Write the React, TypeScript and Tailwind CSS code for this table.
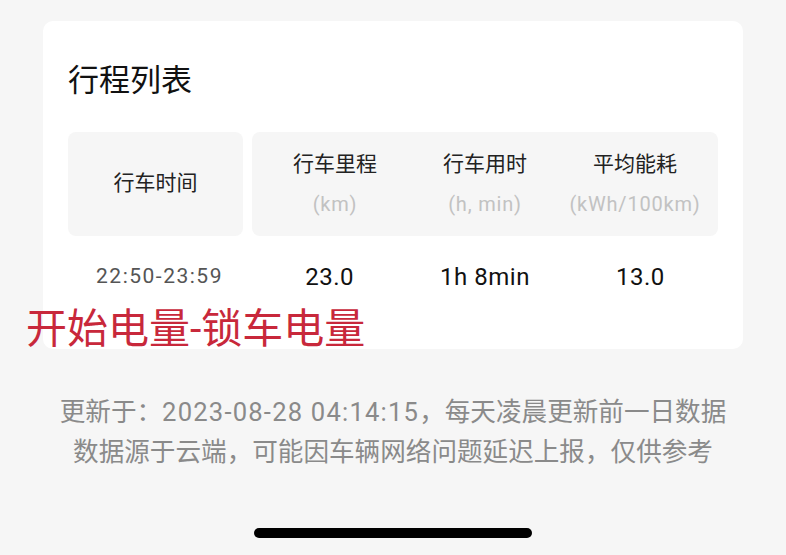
import React from 'react';

const font = { fontFamily: 'Roboto, "Noto Sans CJK SC", sans-serif' };

const columns = [
  { title: '行车里程', unit: '(km)', value: '23.0' },
  { title: '行车用时', unit: '(h, min)', value: '1h 8min' },
  { title: '平均能耗', unit: '(kWh/100km)', value: '13.0' },
];

export default function App() {
  return (
    <div className="relative w-[786px] h-[555px] bg-[#f6f6f6] overflow-hidden" style={font}>
      <div className="pt-[21px] px-[43px]">
        {/* Card */}
        <div className="relative h-[328px] bg-white rounded-[10px] px-[25px] pt-[40px]">
          <h1 className="text-[31px] leading-[40px] text-[#111] font-normal">行程列表</h1>

          {/* Header */}
          <div className="mt-[31px] flex gap-[9px] h-[104px]">
            <div className="w-[175px] rounded-[8px] bg-[#f6f6f6] flex items-center justify-center text-[21px] text-[#222]">
              行车时间
            </div>
            <div className="flex-1 rounded-[8px] bg-[#f6f6f6] grid grid-cols-3 items-center px-[8px]">
              {columns.map((c) => (
                <div key={c.title} className="flex flex-col items-center">
                  <span className="text-[21px] leading-[26px] text-[#222]">{c.title}</span>
                  <span className="mt-[14px] text-[20px] leading-[26px] tracking-[0.8px] text-[#c2c2c2]">{c.unit}</span>
                </div>
              ))}
            </div>
          </div>

          {/* Row */}
          <div className="mt-[23px] flex gap-[9px] items-center">
            <div className="w-[175px] text-center text-[21px] tracking-[1.5px] text-[#555] pl-[8px]">22:50-23:59</div>
            <div className="flex-1 grid grid-cols-3">
              {columns.map((c) => (
                <div key={c.title} className="text-center text-[24px] tracking-[0.5px] text-[#111]">{c.value}</div>
              ))}
            </div>
          </div>
        </div>
      </div>

      {/* Annotation */}
      <div className="absolute left-[26px] top-[303px] text-[41px] leading-[52px] text-[#c8283b]">
        开始电量-锁车电量
      </div>

      {/* Footer */}
      <div className="mt-[43px] flex flex-col items-center text-[25.6px] leading-[40px] text-[#8a8a8a]">
        <p>
          更新于：<span className="tracking-[1.2px]">2023-08-28 04:14:15</span>，每天凌晨更新前一日数据
        </p>
        <p>数据源于云端，可能因车辆网络问题延迟上报，仅供参考</p>
      </div>

      <div className="absolute left-[254px] top-[528px] w-[278px] h-[10px] rounded-full bg-black" />
    </div>
  );
}
